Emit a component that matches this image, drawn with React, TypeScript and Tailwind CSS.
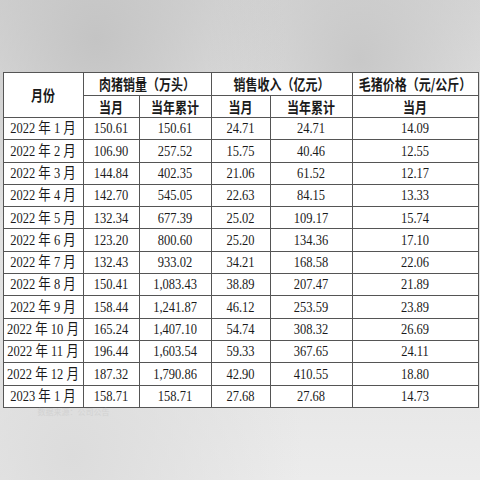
import React from 'react';

const ROWS: [string, string, string, string, string, string][] = [
  ['2022 年 1 月', '150.61', '150.61', '24.71', '24.71', '14.09'],
  ['2022 年 2 月', '106.90', '257.52', '15.75', '40.46', '12.55'],
  ['2022 年 3 月', '144.84', '402.35', '21.06', '61.52', '12.17'],
  ['2022 年 4 月', '142.70', '545.05', '22.63', '84.15', '13.33'],
  ['2022 年 5 月', '132.34', '677.39', '25.02', '109.17', '15.74'],
  ['2022 年 6 月', '123.20', '800.60', '25.20', '134.36', '17.10'],
  ['2022 年 7 月', '132.43', '933.02', '34.21', '168.58', '22.06'],
  ['2022 年 8 月', '150.41', '1,083.43', '38.89', '207.47', '21.89'],
  ['2022 年 9 月', '158.44', '1,241.87', '46.12', '253.59', '23.89'],
  ['2022 年 10 月', '165.24', '1,407.10', '54.74', '308.32', '26.69'],
  ['2022 年 11 月', '196.44', '1,603.54', '59.33', '367.65', '24.11'],
  ['2022 年 12 月', '187.32', '1,790.86', '42.90', '410.55', '18.80'],
  ['2023 年 1 月', '158.71', '158.71', '27.68', '27.68', '14.73'],
];

const cell = 'border border-[#555] text-center align-middle p-0 whitespace-nowrap';

// the source image is a bit stretched vertically, so text gets a taller scale
function T({ children }: { children: React.ReactNode }) {
  return <span className="inline-block scale-y-[1.22]">{children}</span>;
}

export default function App() {
  return (
    <div
      className="w-[480px] h-[480px] overflow-hidden pt-[72px] px-[2.5px] bg-[radial-gradient(ellipse_at_20%_8%,#c4c4c4_0%,transparent_35%),radial-gradient(ellipse_at_75%_12%,#c8c8c8_0%,transparent_30%),radial-gradient(ellipse_at_15%_95%,#dcdcdc_0%,transparent_40%),linear-gradient(to_bottom,#d6d6d6_0%,#dedede_15%,#e8e8e8_85%,#ececec_100%)]"
      style={{ fontFamily: '"Liberation Serif", "Noto Sans CJK SC", serif' }}
    >
      <table className="w-[475px] table-fixed border-collapse bg-white text-[#1a1a1a] text-[12.5px] leading-none">
        <colgroup>
          <col className="w-[80px]" />
          <col className="w-[56px]" />
          <col className="w-[72px]" />
          <col className="w-[59px]" />
          <col className="w-[82px]" />
          <col className="w-[126px]" />
        </colgroup>
        <thead className="font-bold text-[12px]" style={{ fontFamily: '"Noto Sans CJK SC", sans-serif' }}>
          <tr className="h-[23px]">
            <th rowSpan={2} className={cell}><T>月份</T></th>
            <th colSpan={2} className={cell}><T>肉猪销量（万头）</T></th>
            <th colSpan={2} className={cell}><T>销售收入（亿元）</T></th>
            <th className={cell}><T>毛猪价格（元/公斤）</T></th>
          </tr>
          <tr className="h-[22px]">
            <th className={cell}><T>当月</T></th>
            <th className={cell}><T>当年累计</T></th>
            <th className={cell}><T>当月</T></th>
            <th className={cell}><T>当年累计</T></th>
            <th className={cell}><T>当月</T></th>
          </tr>
        </thead>
        <tbody>
          {ROWS.map((r) => (
            <tr key={r[0]} className="h-[22.3px]">
              {r.map((v, i) => (
                <td key={i} className={cell}><T>{v}</T></td>
              ))}
            </tr>
          ))}
        </tbody>
      </table>
      <div className="mt-[1px] ml-[35px] text-[8px] leading-none text-[#d2d2d2]">
        数据来源：公司公告
      </div>
    </div>
  );
}
